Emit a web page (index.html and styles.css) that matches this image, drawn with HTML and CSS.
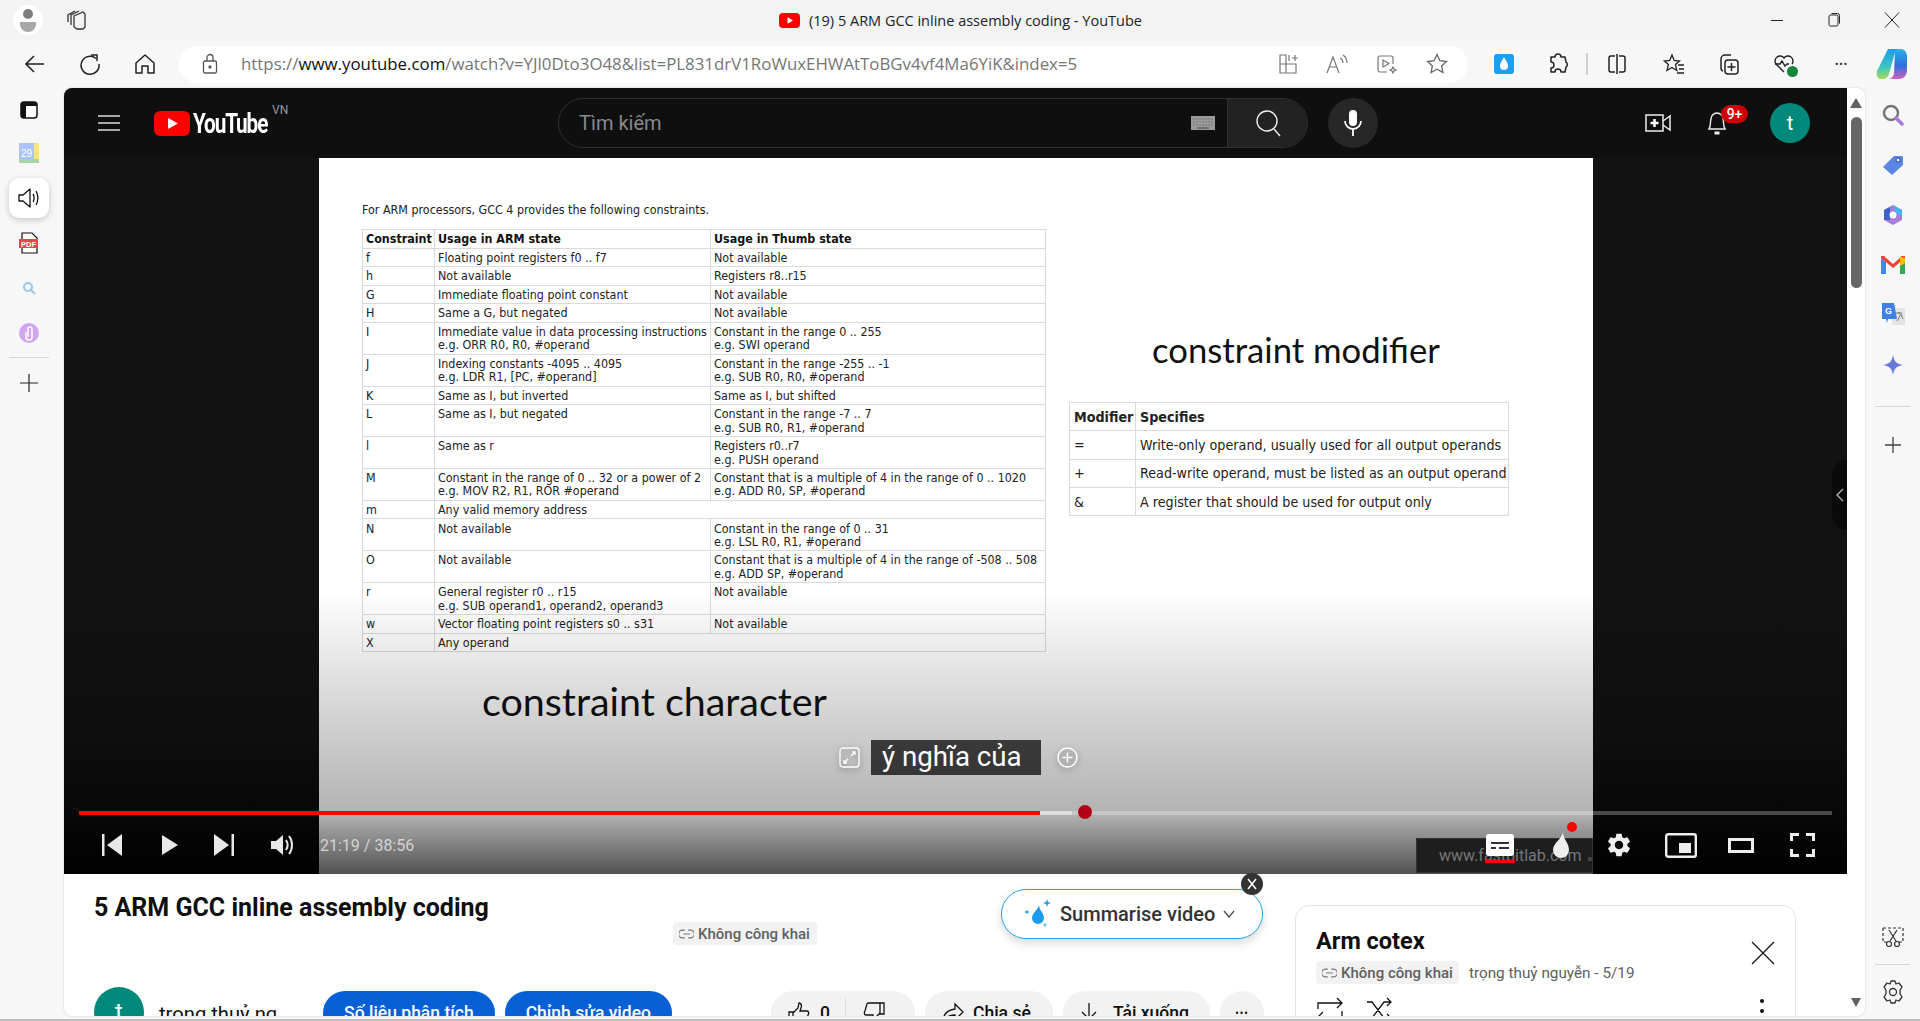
FILE: index.html
```html
<!DOCTYPE html>
<html lang="vi">
<head>
    <meta charset="UTF-8">
    <title>(19) 5 ARM GCC inline assembly coding - YouTube</title>
    <link rel="stylesheet" href="styles.css">
</head>
<body>
    <div class="titlebar">
        <div class="profile">
            <svg width="18" height="24" viewBox="0 0 18 24"><circle cx="9" cy="6" r="5" fill="#7c7c7c"/><path d="M1 14h16v2a7 7 0 0 1-16 0z" fill="#a8a8a8"/></svg>
        </div>
        <svg class="tabs-icon" width="22" height="22" viewBox="0 0 22 22" fill="none" stroke="#333" stroke-width="1.3"><path d="M8 7l9-4 2 2v13l-2 2H11l-3-2z"/><path d="M5 16V6l8-4"/><path d="M2 13V6l7-4"/></svg>
        <div class="window-title">
            <svg width="21" height="15" viewBox="0 0 21 15"><rect width="21" height="15" rx="4" fill="#f00"/><path d="M8.5 4.3v6.4l5.5-3.2z" fill="#fff"/></svg>
            <span>(19) 5 ARM GCC inline assembly coding - YouTube</span>
        </div>
        <div class="window-btns">
            <svg width="16" height="16" viewBox="0 0 16 16" stroke="#222" fill="none"><path d="M2 8.500h12"/></svg>
            <svg width="16" height="16" viewBox="0 0 16 16" stroke="#222" fill="none"><rect x="3" y="3" width="9" height="11" rx="1.500"/><path d="M5.500 1.500h6a2 2 0 0 1 2 2v8"/></svg>
            <svg width="18" height="18" viewBox="0 0 18 18" stroke="#222" fill="none"><path d="M2 1.500l14 15M16 1.500l-14 15"/></svg>
        </div>
    </div>

    <div class="toolbar">
        <svg class="nav-icon" width="24" height="24" viewBox="0 0 24 24" fill="none" stroke="#222" stroke-width="1.600"><path d="M21 12H3M11 4l-8 8 8 8"/></svg>
        <svg class="nav-icon" width="24" height="24" viewBox="0 0 24 24" fill="none" stroke="#222" stroke-width="1.500"><path d="M18 6.500A9 9 0 1 0 21 12"/><path d="M13 3h6v6" /></svg>
        <svg class="nav-icon" width="24" height="24" viewBox="0 0 24 24" fill="none" stroke="#222" stroke-width="1.500"><path d="M3 11l9-8 9 8v10h-6v-7H9v7H3z" stroke-linejoin="round"/></svg>
        <div class="address">
            <svg width="16" height="22" viewBox="0 0 16 22" fill="none" stroke="#555" stroke-width="1.300"><rect x="1.500" y="8" width="13" height="12" rx="1.500"/><path d="M5 8V4.500a3 3 0 0 1 6 0V8"/><circle cx="8" cy="14" r="1" fill="#555"/></svg>
            <div class="url">https://<b>www.youtube.com</b>/watch?v=YJl0Dto3O48&amp;list=PL831drV1RoWuxEHWAtToBGv4vf4Ma6YiK&amp;index=5</div>
            <svg class="addr-icon first" width="22" height="22" viewBox="0 0 22 22" fill="none" stroke="#777" stroke-width="1.200"><path d="M3 11V2h6v18H3zM3 11h16v9H9M12 8V2M15 5h6M18 2v6"/></svg>
            <svg class="addr-icon" width="24" height="22" viewBox="0 0 24 22" fill="none" stroke="#777" stroke-width="1.200"><path d="M2 20L8 4l6 16M4.500 14h7M15 5c2 1 3 3 3 5M18 2c3 2 4 5 4 8"/></svg>
            <svg class="addr-icon" width="24" height="22" viewBox="0 0 24 22" fill="none" stroke="#777" stroke-width="1.200"><path d="M12 19H5a2 2 0 0 1-2-2V5a2 2 0 0 1 2-2h11a2 2 0 0 1 2 2v6"/><path d="M8 7v7l6-3.500z"/><path d="M18 14l1 2 2 1-2 1-1 2-1-2-2-1 2-1z"/></svg>
            <svg class="addr-icon" width="24" height="24" viewBox="0 0 24 24" fill="none" stroke="#666" stroke-width="1.300"><path d="M12 2.500l2.900 6.200 6.600.8-4.900 4.500 1.300 6.600-5.900-3.300-5.900 3.300 1.300-6.600-4.900-4.500 6.600-.8z"/></svg>
        </div>
        <div class="ext-drop">
            <svg width="10" height="14" viewBox="0 0 10 14"><path d="M5 0c1 3 4 5 4 9a4 4 0 0 1-8 0c0-4 3-6 4-9z" fill="#fff"/></svg>
        </div>
        <svg class="tool-icon puzzle" width="24" height="24" viewBox="0 0 24 24" fill="none" stroke="#222" stroke-width="1.500"><path d="M9 5a3 3 0 0 1 6 0h4l1 5a3 3 0 0 1 0 5l-1 5h-4a3 3 0 0 0-6 0H5v-4a3 3 0 0 0 0-6V5z" stroke-linejoin="round"/></svg>
        <div class="tool-sep"></div>
        <svg class="tool-icon split" width="24" height="24" viewBox="0 0 24 24" fill="none" stroke="#222" stroke-width="1.500"><path d="M10 4H6a2 2 0 0 0-2 2v12a2 2 0 0 0 2 2h4M14 4h4a2 2 0 0 1 2 2v12a2 2 0 0 1-2 2h-4M12 2v20"/></svg>
        <svg class="tool-icon fav" width="24" height="24" viewBox="0 0 24 24" fill="none" stroke="#222" stroke-width="1.300"><path d="M10 3l2.200 5.500 5.300.5-4 3.500 1.300 6-4.800-3-5 3 1.400-6-4-3.500 5.300-.5zM16 13h6M17 17h5M15 21h7"/></svg>
        <svg class="tool-icon coll" width="24" height="24" viewBox="0 0 24 24" fill="none" stroke="#222" stroke-width="1.500"><path d="M6 19a3 3 0 0 1-2-3V7a4 4 0 0 1 4-4h6"/><rect x="8" y="8" width="13" height="14" rx="3"/><path d="M14.500 11v8M10.500 15h8"/></svg>
        <div class="tool-icon heart">
            <svg width="24" height="24" viewBox="0 0 24 24" fill="none" stroke="#222" stroke-width="1.400"><path d="M12 20l-8-8a5 5 0 0 1 8-6 5 5 0 0 1 8 6"/><path d="M3 12h5l2-3 3 5 2-2h2"/></svg>
            <span class="check-badge"></span>
        </div>
        <div class="tool-dots">&#8226;&#8226;&#8226;</div>
        <svg class="copilot" width="32" height="34" viewBox="0 0 32 34">
            <defs>
                <linearGradient id="copL" x1="0" y1="0" x2="0" y2="1"><stop offset="0" stop-color="#1e9be8"/><stop offset=".6" stop-color="#3cc6c0"/><stop offset="1" stop-color="#a6d95a"/></linearGradient>
                <linearGradient id="copR" x1="0" y1="0" x2="0" y2="1"><stop offset="0" stop-color="#27b3e6"/><stop offset=".55" stop-color="#2f6fe0"/><stop offset="1" stop-color="#d45fc0"/></linearGradient>
            </defs>
            <path d="M12 2h11c-3 1-4 3-5 7l-5 18c-1 3-3 5-6 5H4c-3-1-4-4-3-8z" fill="url(#copL)"/>
            <path d="M19 4c2-2 4-2 6-2 3 0 5 2 6 6v15c0 5-3 9-8 9H12c3 0 5-2 6-5z" fill="url(#copR)"/>
        </svg>
    </div>

    <div class="main">
        <div class="side-left">
            <svg class="side-item" width="20" height="20" viewBox="0 0 20 20"><rect x="2" y="2" width="16" height="16" rx="3" fill="#fff" stroke="#111" stroke-width="1.500"/><path d="M2 5a3 3 0 0 1 3-3h10a3 3 0 0 1 3 3v1H7v12H5a3 3 0 0 1-3-3z" fill="#111"/></svg>
            <svg class="side-item" width="20" height="20" viewBox="0 0 20 20"><rect width="20" height="20" rx="1" fill="#f8e08e"/><rect width="15" height="17" fill="#a9c4f5"/><rect y="16" width="20" height="4" fill="#a8d5a8"/><text x="2" y="14" font-size="10" fill="#fff" font-family="Liberation Sans">29</text></svg>
            <div class="side-card">
                <svg width="22" height="22" viewBox="0 0 22 22" fill="none" stroke="#111" stroke-width="1.300"><path d="M1 8v6h4l7 6V2L5 8z" stroke-linejoin="round"/><path d="M15 7c1.500 2 1.500 6 0 8M18 4c2.500 4 2.500 10 0 14"/></svg>
            </div>
            <svg class="side-item side-pdf" width="20" height="22" viewBox="0 0 20 22"><path d="M3 1h10l5 5v15H3z" fill="#fff" stroke="#111" stroke-width="1.200"/><rect y="7" width="19" height="9" fill="#f4424c"/><text x="2" y="14.500" font-size="7.500" font-weight="700" fill="#fff" font-family="Liberation Sans">PDF</text></svg>
            <svg class="side-item side-find" width="14" height="14" viewBox="0 0 14 14" fill="none" stroke="#9cc6ea" stroke-width="2"><circle cx="6" cy="6" r="4"/><path d="M9 9l4 4"/></svg>
            <svg class="side-item side-up" width="20" height="20" viewBox="0 0 20 20"><circle cx="10" cy="10" r="10" fill="#cfa6ef"/><path d="M7 9v5a3 3 0 0 0 6 0V6a2 2 0 0 0-4 0v8" fill="none" stroke="#fff" stroke-width="1.500"/></svg>
            <div class="side-sep"></div>
            <svg class="side-item" width="20" height="20" viewBox="0 0 20 20" stroke="#222" stroke-width="1.200"><path d="M10 1v18M1 10h18"/></svg>
        </div>

        <div class="page">
            <div class="content">
                <div class="yt-head">
                    <svg class="burger" width="24" height="18" viewBox="0 0 24 18" stroke="#ddd" stroke-width="1.500"><path d="M1 2h22M1 9h22M1 16h22"/></svg>
                    <div class="logo">
                        <svg width="36" height="25" viewBox="0 0 36 25"><rect width="36" height="25" rx="6" fill="#f00"/><path d="M14 7v11l10-5.500z" fill="#fff"/></svg>
                        <span class="logo-text">YouTube</span>
                        <span class="logo-vn">VN</span>
                    </div>
                    <div class="search">
                        <div class="search-input">
                            <span>Tìm kiếm</span>
                            <svg width="24" height="14" viewBox="0 0 24 14"><rect width="24" height="14" fill="#9a9a9a"/><path d="M2 3h20M2 6h20M2 9h20" stroke="#777" stroke-dasharray="2 1"/><path d="M6 12h12" stroke="#444"/></svg>
                        </div>
                        <div class="search-btn">
                            <svg width="26" height="28" viewBox="0 0 26 28" fill="none" stroke="#eee" stroke-width="1.400"><circle cx="12" cy="12" r="10"/><path d="M19 20l6 7"/></svg>
                        </div>
                    </div>
                    <div class="mic">
                        <svg width="18" height="28" viewBox="0 0 18 28"><rect x="5" y="1" width="8" height="16" rx="4" fill="#fff"/><path d="M1 12a8 8 0 0 0 16 0M9 20v7" fill="none" stroke="#fff" stroke-width="1.800"/></svg>
                    </div>
                    <div class="head-right">
                        <svg width="26" height="20" viewBox="0 0 26 20" fill="none" stroke="#eee" stroke-width="1.500"><rect x="1" y="2" width="17" height="16"/><path d="M18 8l7-5v14l-7-5"/><path d="M9.500 6v8M5.500 10h8" stroke="#fff" stroke-width="2.500"/></svg>
                        <div class="bell">
                            <svg width="22" height="28" viewBox="0 0 22 28" fill="none" stroke="#eee" stroke-width="1.400"><path d="M3 20c2-3 1-7 2-10a6 6 0 0 1 12 0c1 3 0 7 2 10z"/><path d="M8.500 24h5" stroke-width="3"/></svg>
                            <span class="bell-count">9+</span>
                        </div>
                        <div class="avatar-t">t</div>
                    </div>
                </div>

                <div class="player">
                    <div class="slide">
                        <div class="slide-left">
                            <p class="slide-intro">For ARM processors, GCC 4 provides the following constraints.</p>
                            <table class="c-table">
                                <colgroup><col class="c1"><col class="c2"><col></colgroup>
                                <tr><th>Constraint</th><th>Usage in ARM state</th><th>Usage in Thumb state</th></tr>
                                <tr><td>f</td><td>Floating point registers f0 .. f7</td><td>Not available</td></tr>
                                <tr><td>h</td><td>Not available</td><td>Registers r8..r15</td></tr>
                                <tr><td>G</td><td>Immediate floating point constant</td><td>Not available</td></tr>
                                <tr><td>H</td><td>Same a G, but negated</td><td>Not available</td></tr>
                                <tr><td>I</td><td>Immediate value in data processing instructions<br>e.g. ORR R0, R0, #operand</td><td>Constant in the range 0 .. 255<br>e.g. SWI operand</td></tr>
                                <tr><td>J</td><td>Indexing constants -4095 .. 4095<br>e.g. LDR R1, [PC, #operand]</td><td>Constant in the range -255 .. -1<br>e.g. SUB R0, R0, #operand</td></tr>
                                <tr><td>K</td><td>Same as I, but inverted</td><td>Same as I, but shifted</td></tr>
                                <tr><td>L</td><td>Same as I, but negated</td><td>Constant in the range -7 .. 7<br>e.g. SUB R0, R1, #operand</td></tr>
                                <tr><td>l</td><td>Same as r</td><td>Registers r0..r7<br>e.g. PUSH operand</td></tr>
                                <tr><td>M</td><td>Constant in the range of 0 .. 32 or a power of 2<br>e.g. MOV R2, R1, ROR #operand</td><td>Constant that is a multiple of 4 in the range of 0 .. 1020<br>e.g. ADD R0, SP, #operand</td></tr>
                                <tr><td>m</td><td colspan="2">Any valid memory address</td></tr>
                                <tr><td>N</td><td>Not available</td><td>Constant in the range of 0 .. 31<br>e.g. LSL R0, R1, #operand</td></tr>
                                <tr><td>O</td><td>Not available</td><td>Constant that is a multiple of 4 in the range of -508 .. 508<br>e.g. ADD SP, #operand</td></tr>
                                <tr><td>r</td><td>General register r0 .. r15<br>e.g. SUB operand1, operand2, operand3</td><td>Not available</td></tr>
                                <tr><td>w</td><td>Vector floating point registers s0 .. s31</td><td>Not available</td></tr>
                                <tr><td>X</td><td colspan="2">Any operand</td></tr>
                            </table>
                            <div class="slide-char">constraint character</div>
                        </div>
                        <div class="slide-right">
                            <div class="slide-mod">constraint modifier</div>
                            <table class="m-table">
                                <colgroup><col class="m1"><col></colgroup>
                                <tr><th>Modifier</th><th>Specifies</th></tr>
                                <tr><td>=</td><td>Write-only operand, usually used for all output operands</td></tr>
                                <tr><td>+</td><td>Read-write operand, must be listed as an output operand</td></tr>
                                <tr><td>&amp;</td><td>A register that should be used for output only</td></tr>
                            </table>
                        </div>
                    </div>

                    <div class="scrim"></div>

                    <div class="caption">
                        <svg class="cap-btn" width="21" height="21" viewBox="0 0 21 21" fill="none" stroke="#fff" stroke-width="1.300"><rect x="1" y="1" width="19" height="19" rx="3"/><path d="M12 9l4-4M13 5h3v3M9 12l-4 4M5 13v3h3"/></svg>
                        <span class="cap-text">ý nghĩa của</span>
                        <svg class="cap-btn" width="21" height="21" viewBox="0 0 21 21" fill="none" stroke="#fff" stroke-width="1.500"><circle cx="10.500" cy="10.500" r="9.500"/><path d="M10.500 5.500v10M5.500 10.500h10"/></svg>
                    </div>

                    <div class="progress">
                        <div class="prog-red"></div>
                        <div class="prog-buf"></div>
                        <div class="prog-dot"></div>
                    </div>

                    <div class="watermark">
                        <span>www.fastbitlab.com</span>
                        <small>academy</small>
                    </div>

                    <div class="controls">
                        <svg class="ctl prev" width="20" height="22" viewBox="0 0 20 22" fill="#e8e8e8"><rect width="2.500" height="22"/><path d="M20 0v22L5 11z"/></svg>
                        <svg class="ctl play" width="16" height="20" viewBox="0 0 16 20" fill="#e8e8e8"><path d="M0 0v20l16-10z"/></svg>
                        <svg class="ctl next" width="20" height="22" viewBox="0 0 20 22" fill="#e8e8e8"><rect x="17.500" width="2.500" height="22"/><path d="M0 0v22l15-11z"/></svg>
                        <svg class="ctl vol" width="24" height="24" viewBox="0 0 24 24"><path d="M0 8v8h5l7 6V2L5 8z" fill="#e8e8e8"/><path d="M15 7c2 3 2 7 0 10M18 3c4 5 4 13 0 18" fill="none" stroke="#e8e8e8" stroke-width="2"/></svg>
                        <span class="time">21:19 / 38:56</span>
                        <div class="ctl-right">
                            <div class="subs">
                                <svg width="28" height="22" viewBox="0 0 28 22"><rect width="28" height="22" rx="3" fill="#fff"/><path d="M5 9h18M5 14h5M13 14h10" stroke="#333" stroke-width="2"/></svg>
                            </div>
                            <div class="drop">
                                <svg width="18" height="26" viewBox="0 0 18 26"><path d="M11 0C10 7 1 11 1 18a8 8 0 0 0 16 0C17 11 11 7 11 0z" fill="#eee"/></svg>
                                <span class="drop-dot"></span>
                            </div>
                            <svg class="gear" width="28" height="28" viewBox="0 0 24 24"><path fill="#eee" d="M19.14 12.94c.04-.3.06-.61.06-.94 0-.32-.02-.64-.07-.94l2.03-1.58c.18-.14.23-.41.12-.61l-1.92-3.32c-.12-.22-.37-.29-.59-.22l-2.39.96c-.5-.38-1.03-.7-1.62-.94l-.36-2.54c-.04-.24-.24-.41-.48-.41h-3.84c-.24 0-.43.17-.47.41l-.36 2.54c-.59.24-1.13.57-1.62.94l-2.39-.96c-.22-.08-.47 0-.59.22L2.74 8.87c-.12.21-.08.47.12.61l2.03 1.58c-.05.3-.09.63-.09.94s.02.64.07.94l-2.03 1.58c-.18.14-.23.41-.12.61l1.92 3.32c.12.22.37.29.59.22l2.39-.96c.5.38 1.03.7 1.62.94l.36 2.54c.05.24.24.41.48.41h3.84c.24 0 .44-.17.47-.41l.36-2.54c.59-.24 1.13-.56 1.62-.94l2.39.96c.22.08.47 0 .59-.22l1.92-3.32c.12-.22.07-.47-.12-.61l-2.01-1.58zM12 15.6c-1.98 0-3.6-1.62-3.6-3.6s1.62-3.6 3.6-3.6 3.6 1.62 3.6 3.6-1.62 3.6-3.6 3.6z"/></svg>
                            <svg class="mini" width="32" height="25" viewBox="0 0 32 25" fill="none"><rect x="1.200" y="1.200" width="29.600" height="22.600" rx="2" stroke="#eee" stroke-width="2.400"/><rect x="14" y="10" width="12" height="10" fill="#eee"/></svg>
                            <svg class="theater" width="26" height="15" viewBox="0 0 26 15" fill="none"><rect x="1.500" y="1.500" width="23" height="12" stroke="#eee" stroke-width="3"/></svg>
                            <svg class="full" width="25" height="24" viewBox="0 0 25 24" fill="none" stroke="#eee" stroke-width="3"><path d="M1.500 8V1.500H9M16 1.500h7.500V8M23.500 16v6.500H16M9 22.500H1.500V16"/></svg>
                        </div>
                    </div>
                </div>

                <div class="below">
                    <div class="primary">
                        <div class="title-row">
                            <h1 class="video-title">5 ARM GCC inline assembly coding</h1>
                            <div class="badge title-badge">
                                <svg width="15" height="10" viewBox="0 0 13 9" fill="none" stroke="#777"><path d="M5 1H3a3 3 0 0 0 0 7h2M8 1h2a3 3 0 0 1 0 7H8M3.500 4.500h6"/></svg>
                                <span>Không công khai</span>
                            </div>
                            <div class="summarise">
                                <svg width="30" height="30" viewBox="0 0 30 30"><path d="M17 6c0 5 5 8 5 13a6 6 0 0 1-12 0c0-5 6-8 7-13z" fill="#1c9bf0"/><path d="M25 0l1 3 3 1-3 1-1 3-1-3-3-1 3-1zM5 10l.7 2.300L8 13l-2.300.7L5 16l-.7-2.300L2 13l2.300-.7zM23 24l.6 1.400 1.400.6-1.400.6L23 28l-.6-1.400L21 26l1.400-.6z" fill="#1c9bf0"/></svg>
                                <span>Summarise video</span>
                                <svg width="12" height="8" viewBox="0 0 12 8" fill="none" stroke="#444" stroke-width="1.200"><path d="M1 1l5 6 5-6"/></svg>
                                <div class="sum-close">
                                    <svg width="10" height="12" viewBox="0 0 10 12" stroke="#fff" stroke-width="1.500"><path d="M1 1l8 10M9 1L1 11"/></svg>
                                </div>
                            </div>
                        </div>
                        <div class="owner-row">
                            <div class="owner-avatar">t</div>
                            <div class="owner-name">trọng thuỷ ng</div>
                            <div class="btn-blue first-blue">Số liệu phân tích</div>
                            <div class="btn-blue">Chỉnh sửa video</div>
                            <div class="pill like-pill">
                                <svg width="24" height="24" viewBox="0 0 24 24" fill="none" stroke="#111" stroke-width="1.300"><path d="M2 11h4v11H2zM6 12l5-5 1-5c2 0 3 2 2 5l-1 3h7c2 0 2 3 1 4l-2 7c0 1-1 1-2 1H6"/></svg>
                                <span class="like-n">0</span>
                                <span class="like-sep"></span>
                                <svg width="24" height="24" viewBox="0 0 24 24" fill="none" stroke="#111" stroke-width="1.300"><path d="M22 13h-4V2h4zM18 12l-5 5-1 5c-2 0-3-2-2-5l1-3H4c-2 0-2-3-1-4l2-7c0-1 1-1 2-1h11"/></svg>
                            </div>
                            <div class="pill share-pill">
                                <svg width="24" height="24" viewBox="0 0 24 24" fill="none" stroke="#111" stroke-width="1.300"><path d="M14 3l8 8-8 8v-5C8 14 4 16 2 21c0-7 4-12 12-13z"/></svg>
                                <span>Chia sẻ</span>
                            </div>
                            <div class="pill dl-pill">
                                <svg width="20" height="24" viewBox="0 0 20 24" fill="none" stroke="#111" stroke-width="1.300"><path d="M10 2v16M3 11l7 7 7-7M3 22h14"/></svg>
                                <span>Tải xuống</span>
                            </div>
                            <div class="pill more-pill">&#8226;&#8226;&#8226;</div>
                        </div>
                    </div>
                    <div class="playlist">
                        <div class="pl-head">
                            <div class="pl-title">Arm cotex</div>
                            <svg width="24" height="24" viewBox="0 0 24 24" stroke="#111" stroke-width="1.200"><path d="M1 1l22 22M23 1L1 23"/></svg>
                        </div>
                        <div class="pl-meta">
                            <div class="badge">
                                <svg width="15" height="10" viewBox="0 0 13 9" fill="none" stroke="#777"><path d="M5 1H3a3 3 0 0 0 0 7h2M8 1h2a3 3 0 0 1 0 7H8M3.500 4.500h6"/></svg>
                                <span>Không công khai</span>
                            </div>
                            <span class="pl-owner">trọng thuỷ nguyễn - 5/19</span>
                        </div>
                        <div class="pl-actions">
                            <svg width="28" height="26" viewBox="0 0 28 26" fill="none" stroke="#111" stroke-width="1.300"><path d="M2 12V6h24M21 1l5 5-5 5M26 14v6H2M7 15l-5 5 5 5"/></svg>
                            <svg class="pl-shuffle" width="26" height="26" viewBox="0 0 26 26" fill="none" stroke="#111" stroke-width="1.300"><path d="M1 5h5l12 16h7M1 21h5l12-16h7M21 1l4 4-4 4M21 17l4 4-4 4"/></svg>
                            <div class="pl-kebab"><i></i><i></i><i></i></div>
                        </div>
                    </div>
                </div>
            </div>
            <div class="scrollbar">
                <span class="arrow-up"></span>
                <span class="thumb"></span>
                <span class="arrow-down"></span>
            </div>
            <div class="collapse-tab">
                <svg width="8" height="14" viewBox="0 0 8 14" fill="none" stroke="#bbb" stroke-width="1.200"><path d="M7 1L1 7l6 6"/></svg>
            </div>
        </div>

        <div class="side-right">
            <div class="r-slot"><svg width="22" height="22" viewBox="0 0 22 22" fill="none"><circle cx="9" cy="9" r="7" stroke="#777" stroke-width="2.500"/><path d="M14 14l6 6" stroke="#a77bd8" stroke-width="3.500" stroke-linecap="round"/></svg></div>
            <div class="r-slot"><svg width="22" height="22" viewBox="0 0 22 22"><path d="M1 13L12 2h8a1 1 0 0 1 1 1v8L10 21z" fill="#5b86e5"/><circle cx="16" cy="6" r="2" fill="#fff" stroke="#26408f"/></svg></div>
            <div class="r-slot"><svg width="22" height="22" viewBox="0 0 22 22"><path d="M11 1l9 5v10l-9 5-9-5V6z" fill="#a77bd8"/><path d="M11 1l9 5v6l-6-3z" fill="#44b6ee"/><path d="M2 6l6-3v13l-6 0z" fill="#3d62c8"/><circle cx="11" cy="11" r="3.500" fill="#fff"/></svg></div>
            <div class="r-slot"><svg width="24" height="18" viewBox="0 0 24 18"><path d="M0 2v16h5V6z" fill="#4285f4"/><path d="M24 2v16h-5V6z" fill="#34a853"/><path d="M0 2a2 2 0 0 1 4-1l8 7 8-7a2 2 0 0 1 4 1l-12 10z" fill="#ea4335"/><path d="M19 1l5 1v5l-5 3z" fill="#fbbc04"/></svg></div>
            <div class="r-slot"><svg width="24" height="24" viewBox="0 0 24 24"><rect x="11" y="5" width="13" height="17" fill="#e4e4e4"/><path d="M15 10h6M18 9v2M16 18l4-7 2 5" stroke="#777" fill="none"/><path d="M1 0h12l3 16H7l-1 4-1-4H1z" fill="#3f7fe8"/><text x="4" y="11" font-size="9" font-weight="700" fill="#fff" font-family="Liberation Sans">G</text></svg></div>
            <div class="r-slot"><svg width="20" height="20" viewBox="0 0 20 20"><path d="M10 0c1 6 3 9 10 10-7 1-9 4-10 10-1-6-3-9-10-10 7-1 9-4 10-10z" fill="#6a78dc"/></svg></div>
            <div class="side-sep wide"></div>
            <div class="r-slot plus-r"><svg width="18" height="18" viewBox="0 0 18 18" stroke="#444" stroke-width="1.300"><path d="M9 1v16M1 9h16"/></svg></div>
            <svg class="snip" width="22" height="24" viewBox="0 0 22 24" fill="none" stroke="#333" stroke-width="1.200"><path d="M1 4h20v14h-4M1 4v14h4" stroke-dasharray="3 2"/><path d="M7 6l7 11M15 6L8 17"/><circle cx="7" cy="20" r="2.500"/><circle cx="15" cy="20" r="2.500"/></svg>
            <div class="side-sep wide low"></div>
            <svg class="r-gear" width="22" height="24" viewBox="0 0 22 24" fill="none" stroke="#333" stroke-width="1.300"><circle cx="11" cy="12" r="3.500"/><path d="M9 1h4l1 3 3-1 3 4-2 3v4l2 3-3 4-3-1-1 3H9l-1-3-3 1-3-4 2-3v-4L2 7l3-4 3 1z" stroke-linejoin="round"/></svg>
        </div>
    </div>
</body>
</html>
```
FILE: styles.css
```css
* {
    box-sizing: border-box;
}
html, body {
    margin: 0;
    height: 1021px;
    overflow: hidden;
}
body {
    background-color: #f7f7f7;
    font-family: Roboto, "Liberation Sans", sans-serif;
    color: #0f0f0f;
    border-bottom: 2px solid #bdbdbd;
}
svg {
    display: block;
    flex: none;
}

/* browser chrome */
.titlebar {
    height: 40px;
    background-color: #f3f3f3;
    display: flex;
    align-items: center;
    position: relative;
}
.profile {
    width: 30px;
    height: 30px;
    margin-left: 13px;
    border-radius: 50%;
    background-color: #fff;
    display: flex;
    align-items: center;
    justify-content: center;
}
.tabs-icon {
    margin-left: 23px;
}
.window-title {
    display: flex;
    align-items: center;
    gap: 9px;
    margin-left: 691px;
    font-family: "Open Sans", sans-serif;
    font-size: 14.500px;
    color: #222;
}
.window-btns {
    margin-left: auto;
    display: flex;
    align-items: center;
    gap: 41px;
    padding-right: 19px;
}
.toolbar {
    height: 48px;
    display: flex;
    align-items: center;
}
.nav-icon {
    margin-left: 23px;
    margin-right: 8px;
}
.address {
    width: 1289px;
    height: 37px;
    margin-left: 14px;
    border-radius: 19px;
    background-color: #fff;
    display: flex;
    align-items: center;
    padding-left: 23px;
    padding-right: 19px;
}
.url {
    margin-left: 23px;
    margin-top: -2px;
    font-family: "Open Sans", sans-serif;
    font-size: 16.850px;
    color: #767676;
    white-space: nowrap;
}
.url b {
    font-weight: 400;
    color: #111;
}
.addr-icon {
    margin-left: 26px;
}
.addr-icon.first {
    margin-left: auto;
}
.ext-drop {
    width: 20px;
    height: 20px;
    margin-left: 26px;
    border-radius: 3px;
    background-color: #1a9ff2;
    display: flex;
    align-items: center;
    justify-content: center;
}
.tool-icon {
    position: relative;
}
.puzzle {
    margin-left: 32px;
}
.tool-sep {
    width: 2px;
    height: 22px;
    margin-left: 16px;
    background-color: #cfcfcf;
}
.split {
    margin-left: 17px;
}
.fav {
    margin-left: 33px;
}
.coll, .heart {
    margin-left: 31px;
}
.check-badge {
    position: absolute;
    right: -2px;
    bottom: -1px;
    width: 11px;
    height: 11px;
    border-radius: 50%;
    background-color: #14833b;
}
.tool-dots {
    width: 24px;
    margin-left: 39px;
    font-size: 10px;
    letter-spacing: 1px;
    color: #222;
}
.copilot {
    margin-left: 17px;
}

.main {
    display: flex;
    height: 928px;
}
.side-left {
    width: 64px;
    display: flex;
    flex-direction: column;
    align-items: center;
    padding-right: 6px;
    padding-top: 12px;
}
.side-left .side-item {
    margin-bottom: 23px;
}
.side-card {
    width: 40px;
    height: 40px;
    margin-top: -8px;
    margin-bottom: 14px;
    border-radius: 10px;
    background-color: #fff;
    box-shadow: 0 2px 6px rgba(0,0,0,.2);
    display: flex;
    align-items: center;
    justify-content: center;
}
.side-left .side-find {
    margin-top: 4px;
    margin-bottom: 28px;
}
.side-left .side-up {
    margin-bottom: 14px;
}
.side-sep {
    width: 40px;
    height: 1px;
    margin-bottom: 15px;
    background-color: #d6d6d6;
    flex: none;
}
.side-right {
    width: 55px;
    display: flex;
    flex-direction: column;
    align-items: center;
    padding-top: 2px;
}
.r-slot {
    height: 50px;
    display: flex;
    align-items: center;
    justify-content: center;
    flex: none;
}
.side-sep.wide {
    width: 35px;
    margin-top: 16px;
    margin-bottom: 0;
}
.plus-r {
    margin-top: 13px;
}
.snip {
    margin-top: auto;
}
.side-sep.low {
    margin-top: 16px;
}
.r-gear {
    margin-top: 15px;
    margin-bottom: 12px;
}

/* page */
.page {
    width: 1801px;
    display: flex;
    position: relative;
    border-radius: 8px;
    overflow: hidden;
    background-color: #fff;
    box-shadow: 0 0 2px rgba(0,0,0,.2);
}
.content {
    width: 1783px;
    flex: none;
}
.scrollbar {
    flex: 1;
    position: relative;
    display: flex;
    flex-direction: column;
    align-items: center;
    padding-top: 10px;
    padding-bottom: 9px;
}
.arrow-up {
    width: 0;
    height: 0;
    border-left: 6.500px solid transparent;
    border-right: 6.500px solid transparent;
    border-bottom: 10px solid #606060;
}
.thumb {
    width: 11px;
    height: 171px;
    margin-top: 9px;
    border-radius: 6px;
    background-color: #666;
}
.arrow-down {
    width: 0;
    height: 0;
    margin-top: auto;
    border-left: 5.500px solid transparent;
    border-right: 5.500px solid transparent;
    border-top: 9px solid #606060;
}
.collapse-tab {
    position: absolute;
    left: 1768px;
    top: 372px;
    width: 15px;
    height: 70px;
    border-radius: 15px 0 0 15px;
    background-color: #0a0a0a;
    display: flex;
    align-items: center;
    justify-content: center;
}

/* youtube header */
.yt-head {
    height: 70px;
    background-color: #0f0f0f;
    display: flex;
    align-items: center;
}
.burger {
    margin-left: 33px;
}
.logo {
    display: flex;
    align-items: center;
    margin-left: 33px;
    width: 134px;
    position: relative;
}
.logo-text {
    margin-left: 3px;
    font-family: Roboto, sans-serif;
    font-weight: 700;
    font-size: 28px;
    letter-spacing: -1.500px;
    color: #fff;
    transform: scaleX(.74);
    transform-origin: left center;
}
.logo-vn {
    position: absolute;
    left: 118px;
    top: -4px;
    font-size: 12px;
    color: #9a9a9a;
}
.search {
    width: 750px;
    height: 50px;
    margin-left: 270px;
    border-radius: 25px;
    border: 1px solid #303030;
    display: flex;
    overflow: hidden;
}
.search-input {
    flex: 1;
    display: flex;
    align-items: center;
    justify-content: space-between;
    padding-left: 20px;
    padding-right: 12px;
    font-size: 20px;
    color: #888;
}
.search-btn {
    width: 80px;
    background-color: #222;
    display: flex;
    align-items: center;
    justify-content: center;
    border-left: 1px solid #303030;
}
.mic {
    width: 50px;
    height: 50px;
    margin-left: 20px;
    border-radius: 50%;
    background-color: #272727;
    display: flex;
    align-items: center;
    justify-content: center;
}
.head-right {
    margin-left: auto;
    display: flex;
    align-items: center;
    padding-right: 37px;
}
.bell {
    position: relative;
    margin-left: 35px;
}
.bell-count {
    position: absolute;
    left: 15px;
    top: -4px;
    width: 27px;
    height: 18px;
    border-radius: 9px;
    background-color: #cc0000;
    color: #fff;
    font-size: 14px;
    font-weight: 500;
    text-align: center;
    line-height: 18px;
}
.avatar-t {
    width: 40px;
    height: 40px;
    margin-left: 42px;
    border-radius: 50%;
    background-color: #00897b;
    color: #fff;
    font-size: 20px;
    text-align: center;
    line-height: 40px;
}

/* player */
.player {
    height: 716px;
    position: relative;
    overflow: hidden;
    background: linear-gradient(#121212 80%, #050505);
}
.slide {
    width: 1274px;
    height: 100%;
    margin-left: 255px;
    background-color: #fff;
    display: flex;
    padding-left: 43px;
    padding-top: 45px;
    color: #222;
}
.slide-left {
    width: 684px;
    flex: none;
}
.slide-right {
    margin-left: 23px;
    width: 440px;
    flex: none;
}
.slide-intro {
    margin: 0 0 13px;
    font-family: "DejaVu Sans Condensed", "DejaVu Sans", sans-serif;
    font-size: 12.400px;
    line-height: 13px;
}
.c-table, .m-table {
    border-collapse: collapse;
    table-layout: fixed;
    width: 100%;
}
.c-table {
    font-family: "DejaVu Sans Condensed", "DejaVu Sans", sans-serif;
    font-size: 12.400px;
    line-height: 13.300px;
}
.c-table th, .c-table td {
    border: 1.300px solid #dadada;
    padding: 2.150px 3px;
    text-align: left;
    vertical-align: top;
    white-space: nowrap;
    overflow: hidden;
}
.c-table th {
    color: #111;
}
.c1 {
    width: 72px;
}
.c2 {
    width: 276px;
}
.slide-char {
    margin-top: 26px;
    margin-left: 120px;
    font-family: Lato, sans-serif;
    font-size: 39.400px;
    line-height: 46px;
    color: #111;
}
.slide-mod {
    margin-top: 127px;
    margin-bottom: 32px;
    margin-left: 83px;
    font-family: Lato, sans-serif;
    font-size: 34.700px;
    line-height: 40px;
    color: #111;
}
.m-table {
    font-family: "DejaVu Sans Condensed", "DejaVu Sans", sans-serif;
    font-size: 14.200px;
}
.m-table th, .m-table td {
    height: 28.300px;
    border: 1.500px solid #dadada;
    padding: 2px 4px;
    text-align: left;
    white-space: nowrap;
    overflow: hidden;
}
.m1 {
    width: 66px;
}
.scrim {
    position: absolute;
    left: 0;
    right: 0;
    bottom: 0;
    height: 284px;
    background: linear-gradient(rgba(0,0,0,0), rgba(0,0,0,.18) 46%, rgba(0,0,0,.3) 79%, rgba(0,0,0,.68));
}
.caption {
    position: absolute;
    left: 775px;
    top: 582px;
    display: flex;
    align-items: center;
}
.cap-text {
    width: 170px;
    height: 35px;
    margin-left: 11px;
    margin-right: 16px;
    padding-left: 11px;
    background-color: rgba(8,8,8,.75);
    color: #fff;
    font-size: 27.700px;
    line-height: 33px;
    white-space: nowrap;
}
.cap-btn {
    filter: drop-shadow(0 2px 3px rgba(0,0,0,.4));
}
.progress {
    position: absolute;
    left: 15px;
    top: 653px;
    width: 1753px;
    height: 4px;
    background-color: rgba(255,255,255,.27);
}
.prog-red {
    position: absolute;
    left: 0;
    top: 0;
    height: 4px;
    width: 961px;
    background-color: #f00;
}
.prog-buf {
    position: absolute;
    left: 961px;
    top: 0;
    height: 4px;
    width: 32px;
    background-color: #ddd;
}
.prog-dot {
    position: absolute;
    left: 999px;
    top: -6px;
    width: 14px;
    height: 14px;
    border-radius: 50%;
    background-color: #b5001a;
    filter: blur(.6px);
}
.watermark {
    position: absolute;
    left: 1352px;
    top: 680px;
    width: 177px;
    height: 35px;
    padding-left: 22px;
    background-color: #1e1e1e;
    border: 1px solid #333;
    color: #777;
    font-size: 16px;
    line-height: 33px;
    white-space: nowrap;
    overflow: hidden;
}
.watermark small {
    font-size: 8px;
    margin-left: 2px;
    color: #666;
}
.controls {
    position: absolute;
    left: 38px;
    right: 32px;
    top: 672px;
    height: 30px;
    display: flex;
    align-items: center;
}
.play {
    margin-left: 40px;
}
.next {
    margin-left: 36px;
}
.vol {
    margin-left: 37px;
}
.time {
    margin-left: 25px;
    color: #d4d4d4;
    font-size: 16px;
    white-space: nowrap;
}
.ctl-right {
    margin-left: auto;
    display: flex;
    align-items: center;
}
.subs {
    position: relative;
}
.subs::after {
    content: "";
    position: absolute;
    left: -1px;
    right: -1px;
    bottom: -7px;
    height: 3px;
    background-color: #f00;
}
.drop {
    position: relative;
    margin-left: 38px;
}
.drop-dot {
    position: absolute;
    left: 15px;
    top: -10px;
    width: 10px;
    height: 10px;
    border-radius: 50%;
    background-color: #f00;
}
.gear {
    margin-left: 35px;
}
.mini {
    margin-left: 32px;
}
.theater {
    margin-left: 31px;
}
.full {
    margin-left: 36px;
}

/* under the video */
.below {
    display: flex;
    padding-left: 30px;
}
.primary {
    width: 1170px;
    flex: none;
}
.title-row {
    height: 113px;
    display: flex;
    align-items: flex-start;
}
.video-title {
    width: 579px;
    margin: 21px 0 0;
    font-size: 25px;
    line-height: 26px;
    font-weight: 700;
    white-space: nowrap;
}
.badge {
    height: 23px;
    display: inline-flex;
    align-items: center;
    gap: 4px;
    padding: 0 6px;
    border-radius: 4px;
    background-color: #f2f2f2;
    color: #606060;
    font-size: 15px;
    font-weight: 500;
    white-space: nowrap;
}
.title-badge {
    width: 144px;
    margin-top: 48px;
}
.summarise {
    width: 262px;
    height: 50px;
    margin-left: 184px;
    margin-top: 15px;
    border-radius: 25px;
    border: 1px solid #1fa3f5;
    background-color: #fff;
    box-shadow: 0 4px 10px rgba(0,0,0,.15);
    display: flex;
    align-items: center;
    padding-left: 20px;
    gap: 8px;
    color: #333;
    font-size: 20px;
    font-weight: 500;
    position: relative;
}
.sum-close {
    position: absolute;
    right: -1px;
    top: -17px;
    width: 22px;
    height: 22px;
    border-radius: 50%;
    background-color: #333;
    display: flex;
    align-items: center;
    justify-content: center;
}
.owner-row {
    display: flex;
    align-items: flex-start;
}
.owner-avatar {
    width: 50px;
    height: 50px;
    border-radius: 50%;
    background-color: #00897b;
    color: #fff;
    font-size: 24px;
    text-align: center;
    line-height: 50px;
    flex: none;
}
.owner-name {
    width: 167px;
    margin-left: 15px;
    margin-top: 15px;
    font-size: 20.200px;
    white-space: nowrap;
}
.btn-blue {
    height: 44px;
    margin-top: 4px;
    padding: 0 21px;
    border-radius: 22px;
    background-color: #065fd4;
    color: #fff;
    font-size: 17.500px;
    font-weight: 500;
    line-height: 44px;
    white-space: nowrap;
    margin-left: 10px;
}
.first-blue {
    margin-left: 0;
}
.pill {
    height: 44px;
    margin-top: 4px;
    margin-left: 10px;
    border-radius: 22px;
    background-color: #f2f2f2;
    display: flex;
    align-items: center;
    font-size: 17.500px;
    font-weight: 500;
    white-space: nowrap;
    flex: none;
}
.like-pill {
    width: 144px;
    margin-left: 99px;
    padding-left: 16px;
}
.like-n {
    margin-left: 9px;
}
.like-sep {
    width: 1px;
    height: 30px;
    margin-left: 15px;
    margin-right: 16px;
    background-color: #ddd;
}
.share-pill {
    width: 128px;
    padding-left: 16px;
    gap: 8px;
}
.dl-pill {
    width: 147px;
    padding-left: 16px;
    gap: 14px;
}
.more-pill {
    width: 44px;
    justify-content: center;
    font-size: 10px;
    letter-spacing: 1px;
}
.playlist {
    width: 501px;
    height: 200px;
    margin-left: 31px;
    margin-top: 31px;
    padding: 21px 20px;
    border: 1px solid #e5e5e5;
    border-radius: 14px;
}
.pl-head {
    display: flex;
    justify-content: space-between;
    align-items: flex-start;
    height: 34px;
}
.pl-head svg {
    margin-top: 14px;
}
.pl-title {
    font-size: 23.500px;
    font-weight: 700;
    line-height: 28px;
}
.pl-meta {
    display: flex;
    align-items: center;
    gap: 10px;
    font-size: 15.300px;
    color: #606060;
}
.pl-actions {
    display: flex;
    align-items: flex-start;
    margin-top: 13px;
}
.pl-shuffle {
    margin-left: 22px;
}
.pl-kebab {
    margin-left: auto;
    margin-right: 11px;
    display: flex;
    flex-direction: column;
    gap: 6px;
    padding-top: 2px;
}
.pl-kebab i {
    width: 4px;
    height: 4px;
    border-radius: 50%;
    background-color: #111;
}
```
